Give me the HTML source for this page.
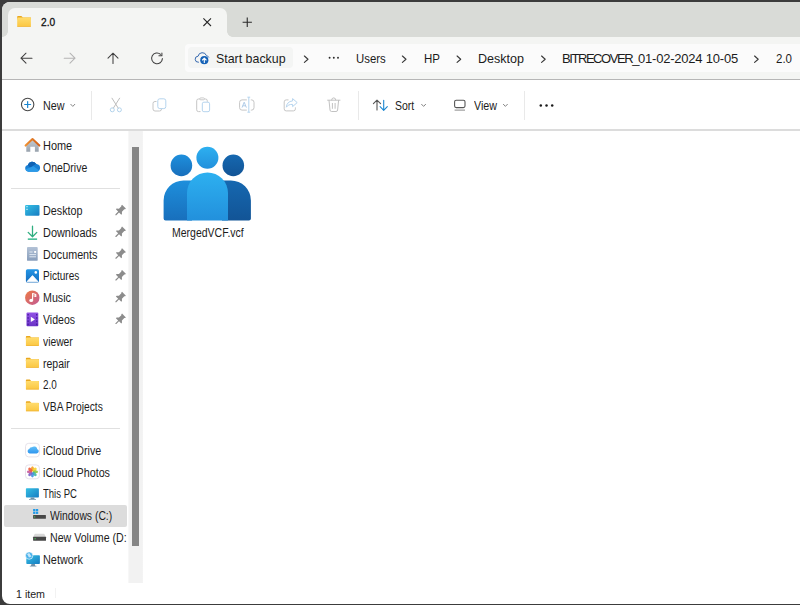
<!DOCTYPE html>
<html><head><meta charset="utf-8"><title>2.0</title>
<style>
*{box-sizing:border-box;margin:0;padding:0}
html,body{width:800px;height:605px;overflow:hidden;background:#3c3c3c}
body{font-family:"Liberation Sans",sans-serif;font-size:12px;color:#1b1b1b;position:relative}
.abs{position:absolute}
#win{position:absolute;left:2px;top:2px;width:806px;height:601.5px;background:#fff;border-radius:8px;overflow:hidden}
#title{position:absolute;left:0;top:0;width:100%;height:34.6px;background:#d9dbd7}
#tab{position:absolute;left:6px;top:6px;width:219px;height:29px;background:#f4f5f3;border-radius:7px 7px 0 0}
#nav{position:absolute;left:0;top:34.5px;width:100%;height:42.5px;background:#f4f5f3}
#navline{position:absolute;left:0;top:77px;width:100%;height:1px;background:#b6b6b6}
#addr{position:absolute;left:182.7px;top:42px;width:640px;height:28.2px;background:#fbfbfb;border-radius:4px}
#bk{position:absolute;left:186.2px;top:45.4px;width:105px;height:21px;background:#f4f5f4;border-radius:4px}
#tool{position:absolute;left:0;top:78px;width:100%;height:49px;background:#fff}
#toolline{position:absolute;left:0;top:127.3px;width:100%;height:1.4px;background:#dcdcdc}
#track{position:absolute;left:125.8px;top:128.5px;width:15.5px;height:452.5px;background:linear-gradient(90deg,#fbfbfb 0,#f2f2f2 1.2px,#f2f2f2 14.3px,#fbfbfb 15.5px)}
#thumb{position:absolute;left:130px;top:144.5px;width:7px;height:399px;background:#868686}
.t{position:absolute;white-space:nowrap;line-height:16px;transform-origin:0 0}
.sep{position:absolute;background:#e0e0e0;height:1px}
.vsep{position:absolute;background:#e9e9e9;width:1px}
#sel{position:absolute;left:1.5px;top:503px;width:123.7px;height:21.6px;background:#dcdcdc;border-radius:2px}
</style></head><body>
<div id="win">
 <div id="title"></div>
 <div id="tab"></div>
 <div class="abs" style="left:0;top:28.5px;width:6px;height:6px;background:radial-gradient(circle at 0 0,#d9dbd7 5.6px,#f4f5f3 6.2px)"></div>
 <div class="abs" style="left:225px;top:28.5px;width:6px;height:6px;background:radial-gradient(circle at 100% 0,#d9dbd7 5.6px,#f4f5f3 6.2px)"></div>
 <div id="nav"></div>
 <div id="addr"></div>
 <div id="bk"></div>
 <div id="navline"></div>
 <div id="tool"></div>
 <div id="toolline"></div>
 <div id="track"></div>
 <div id="thumb"></div>
 <div id="sel"></div>
 <div class="sep" style="left:9px;top:186.3px;width:109px"></div>
 <div class="sep" style="left:9px;top:426px;width:109px"></div>
 <div class="vsep" style="left:89px;top:89px;height:28.5px"></div>
 <div class="vsep" style="left:355.6px;top:89px;height:28.5px"></div>
 <div class="vsep" style="left:522px;top:89px;height:28.5px"></div>
 <div class="vsep" style="left:52.6px;top:586px;height:10px;background:#f2f2f2"></div>
 <div class="t" style="left:38.8px;top:12.36px;font-size:10.8px;color:#111;transform:scaleX(0.9390);-webkit-text-stroke:0.3px #111;">2.0</div>
 <div class="t" style="left:213.9px;top:49.20px;font-size:13px;color:#1c1c1c;transform:scaleX(0.9534);">Start backup</div>
 <div class="t" style="left:353.5px;top:49.20px;font-size:13px;color:#1c1c1c;transform:scaleX(0.8747);">Users</div>
 <div class="t" style="left:421.5px;top:49.20px;font-size:13px;color:#1c1c1c;transform:scaleX(0.8858);">HP</div>
 <div class="t" style="left:475.5px;top:49.20px;font-size:13px;color:#1c1c1c;transform:scaleX(0.9643);">Desktop</div>
 <div class="t" style="left:773.5px;top:49.20px;font-size:13px;color:#1c1c1c;transform:scaleX(0.8850);">2.0</div>
 <div class="t" style="left:40.5px;top:95.64px;font-size:12px;color:#1c1c1c;transform:scaleX(0.8953);">New</div>
 <div class="t" style="left:392.5px;top:95.64px;font-size:12px;color:#1c1c1c;transform:scaleX(0.8721);">Sort</div>
 <div class="t" style="left:471.5px;top:95.64px;font-size:12px;color:#1c1c1c;transform:scaleX(0.8916);">View</div>
 <div class="t" style="left:169.9px;top:223.04px;font-size:12px;color:#1c1c1c;transform:scaleX(0.8741);">MergedVCF.vcf</div>
 <div class="t" style="left:13.5px;top:584.42px;font-size:11.5px;color:#1c1c1c;transform:scaleX(0.9257);">1 item</div>
 <div class="t" style="left:40.5px;top:135.74px;font-size:12px;color:#1c1c1c;transform:scaleX(0.9121);">Home</div>
 <div class="t" style="left:40.5px;top:157.53px;font-size:12px;color:#1c1c1c;transform:scaleX(0.8720);">OneDrive</div>
 <div class="t" style="left:40.5px;top:201.11px;font-size:12px;color:#1c1c1c;transform:scaleX(0.8971);">Desktop</div>
 <div class="t" style="left:40.5px;top:222.90px;font-size:12px;color:#1c1c1c;transform:scaleX(0.9095);">Downloads</div>
 <div class="t" style="left:40.5px;top:244.69px;font-size:12px;color:#1c1c1c;transform:scaleX(0.8978);">Documents</div>
 <div class="t" style="left:40.5px;top:266.48px;font-size:12px;color:#1c1c1c;transform:scaleX(0.8372);">Pictures</div>
 <div class="t" style="left:40.5px;top:288.27px;font-size:12px;color:#1c1c1c;transform:scaleX(0.8901);">Music</div>
 <div class="t" style="left:40.5px;top:310.06px;font-size:12px;color:#1c1c1c;transform:scaleX(0.8771);">Videos</div>
 <div class="t" style="left:40.5px;top:331.85px;font-size:12px;color:#1c1c1c;transform:scaleX(0.8591);">viewer</div>
 <div class="t" style="left:40.5px;top:353.64px;font-size:12px;color:#1c1c1c;transform:scaleX(0.8733);">repair</div>
 <div class="t" style="left:40.5px;top:375.43px;font-size:12px;color:#1c1c1c;transform:scaleX(0.8270);">2.0</div>
 <div class="t" style="left:40.5px;top:397.22px;font-size:12px;color:#1c1c1c;transform:scaleX(0.8539);">VBA Projects</div>
 <div class="t" style="left:40.5px;top:440.80px;font-size:12px;color:#1c1c1c;transform:scaleX(0.8920);">iCloud Drive</div>
 <div class="t" style="left:40.5px;top:462.59px;font-size:12px;color:#1c1c1c;transform:scaleX(0.8967);">iCloud Photos</div>
 <div class="t" style="left:40.5px;top:484.38px;font-size:12px;color:#1c1c1c;transform:scaleX(0.7941);">This PC</div>
 <div class="t" style="left:47.8px;top:506.17px;font-size:12px;color:#1c1c1c;transform:scaleX(0.8637);">Windows (C:)</div>
 <div class="t" style="left:47.8px;top:527.96px;font-size:12px;color:#1c1c1c;transform:scaleX(0.8846);">New Volume (D:</div>
 <div class="t" style="left:40.5px;top:549.75px;font-size:12px;color:#1c1c1c;transform:scaleX(0.9065);">Network</div>
 <div class="t" style="left:560.0px;top:49.20px;font-size:13px;color:#1c1c1c"><span style="letter-spacing:-1.432px">BITRECOVER_</span><span style="letter-spacing:-0.216px">01-02-2024 10-05</span></div>
 <svg class="abs" style="left:-2px;top:-2px" width="800" height="605" viewBox="0 0 800 605">
<defs>
<linearGradient id="gf" x1="0" y1="0" x2="0" y2="1"><stop offset="0" stop-color="#ffdc6e"/><stop offset="1" stop-color="#fbc640"/></linearGradient>
<linearGradient id="gdesk" x1="0" y1="0" x2="1" y2="1"><stop offset="0" stop-color="#35c0e4"/><stop offset="1" stop-color="#177cc2"/></linearGradient>
<linearGradient id="gdoc" x1="0" y1="0" x2="0" y2="1"><stop offset="0" stop-color="#b3c2d6"/><stop offset="1" stop-color="#879dbb"/></linearGradient>
<linearGradient id="gpic" x1="0" y1="0" x2="0" y2="1"><stop offset="0" stop-color="#2496e6"/><stop offset="1" stop-color="#136bbd"/></linearGradient>
<linearGradient id="gmus" x1="0" y1="0" x2="1" y2="1"><stop offset="0" stop-color="#ee7a42"/><stop offset="1" stop-color="#c25a96"/></linearGradient>
<linearGradient id="gvid" x1="0" y1="0" x2="0" y2="1"><stop offset="0" stop-color="#9352e6"/><stop offset="1" stop-color="#6a33c6"/></linearGradient>
<linearGradient id="groof" x1="0" y1="0" x2="1" y2="0"><stop offset="0" stop-color="#f09030"/><stop offset="1" stop-color="#d2611a"/></linearGradient>
<linearGradient id="ghouse" x1="0" y1="0" x2="0" y2="1"><stop offset="0" stop-color="#c6ccd2"/><stop offset="1" stop-color="#98a2ad"/></linearGradient>
<linearGradient id="gic" x1="0" y1="0" x2="0" y2="1"><stop offset="0" stop-color="#62c0f8"/><stop offset="1" stop-color="#2f96ee"/></linearGradient>
<linearGradient id="pc" x1="0" y1="0" x2="0" y2="1"><stop offset="0" stop-color="#2db0f0"/><stop offset="1" stop-color="#2290dc"/></linearGradient>
<linearGradient id="pl" x1="0" y1="0" x2="0" y2="1"><stop offset="0" stop-color="#1e8fdc"/><stop offset="1" stop-color="#186fbc"/></linearGradient>
<linearGradient id="pr" x1="0" y1="0" x2="0" y2="1"><stop offset="0" stop-color="#1668b0"/><stop offset="1" stop-color="#125496"/></linearGradient>
</defs>
<path d="M18.00 16.00 h3.33 l1.6 1.6 h7.97 v2 h-13.70 v-2.8 q0 -0.8 0.8 -0.8z" fill="#e9a71e"/>
<rect x="17.20" y="17.50" width="13.70" height="9.30" rx="0.9" fill="url(#gf)"/>
<rect x="17.20" y="26.10" width="13.70" height="0.7" rx="0.3" fill="#eeb035" opacity="0.8"/>
<path d="M203.4 18.4 L211 26 M211 18.4 L203.4 26" stroke="#2a2a2a" stroke-width="1.1" fill="none"/>
<path d="M242.6 22.3 H251.9 M247.25 17.6 V27" stroke="#2a2a2a" stroke-width="1.1" fill="none"/>
<g fill="none" stroke="#404040" stroke-width="1.05" stroke-linecap="round" stroke-linejoin="round">
<path d="M32 58.2 H21 M26 53.2 L21 58.2 L26 63.2"/>
<path d="M113 63.5 V53.2 M108 58.2 L113 53.2 L118 58.2"/>
<path d="M162.4 58.6 A5.4 5.4 0 1 1 160.6 54.3"/>
<path d="M161.9 52.9 V55.7 H158.9"/>
</g>
<path d="M64.2 58.2 H75 M70 53.2 L75 58.2 L70 63.2" fill="none" stroke="#b4b4b4" stroke-width="1.05" stroke-linecap="round" stroke-linejoin="round"/>
<path d="M198.6 62.2 h-0.3 a3 3 0 0 1 -0.2 -6 a4.3 4.3 0 0 1 8.3 -0.6 a3.1 3.1 0 0 1 2.3 1.6" fill="none" stroke="#2d62ac" stroke-width="0.95" stroke-linecap="round"/>
<circle cx="204.3" cy="60.2" r="4.7" fill="#fbfbfb"/><circle cx="204.3" cy="60.2" r="4.1" fill="#1461b6"/>
<path d="M204.3 62.4 V58.6 M202.5 60 L204.3 58.2 L206.1 60" fill="none" stroke="#fff" stroke-width="1.1" stroke-linecap="round" stroke-linejoin="round"/>
<path d="M304.4 56 L308.0 59.2 L304.4 62.4" fill="none" stroke="#3a3a3a" stroke-width="1.15" stroke-linecap="round" stroke-linejoin="round"/>
<path d="M402.4 56 L406.0 59.2 L402.4 62.4" fill="none" stroke="#3a3a3a" stroke-width="1.15" stroke-linecap="round" stroke-linejoin="round"/>
<path d="M457.1 56 L460.7 59.2 L457.1 62.4" fill="none" stroke="#3a3a3a" stroke-width="1.15" stroke-linecap="round" stroke-linejoin="round"/>
<path d="M541.6 56 L545.2 59.2 L541.6 62.4" fill="none" stroke="#3a3a3a" stroke-width="1.15" stroke-linecap="round" stroke-linejoin="round"/>
<path d="M754.6 56 L758.2 59.2 L754.6 62.4" fill="none" stroke="#3a3a3a" stroke-width="1.15" stroke-linecap="round" stroke-linejoin="round"/>
<circle cx="329.6" cy="57.7" r="0.95" fill="#2a2a2a"/>
<circle cx="333.8" cy="57.7" r="0.95" fill="#2a2a2a"/>
<circle cx="338.0" cy="57.7" r="0.95" fill="#2a2a2a"/>
<circle cx="27.65" cy="104.5" r="6.2" fill="none" stroke="#4a4a4a" stroke-width="1.1"/>
<path d="M24.7 104.5 H30.6 M27.65 101.5 V107.5" stroke="#1a86d0" stroke-width="1.2" fill="none" stroke-linecap="round"/>
<path d="M70.8 104.3 L72.8 106.4 L74.8 104.3" fill="none" stroke="#777" stroke-width="0.9" stroke-linecap="round" stroke-linejoin="round"/>
<path d="M421.6 104.3 L423.6 106.4 L425.6 104.3" fill="none" stroke="#777" stroke-width="0.9" stroke-linecap="round" stroke-linejoin="round"/>
<path d="M503.4 104.3 L505.4 106.4 L507.4 104.3" fill="none" stroke="#777" stroke-width="0.9" stroke-linecap="round" stroke-linejoin="round"/>
<path d="M112 98.2 L118.3 108.2 M119.6 98.2 L113.3 108.2" stroke="#bdbdbd" stroke-width="1" fill="none" stroke-linecap="round"/>
<circle cx="112.3" cy="109.8" r="2" fill="none" stroke="#b3d3ec" stroke-width="1"/><circle cx="119.4" cy="109.8" r="2" fill="none" stroke="#b3d3ec" stroke-width="1"/>
<path d="M156.5 101.5 h-1.5 a2 2 0 0 0 -2 2 v5.5 a2 2 0 0 0 2 2 h4.5 a2 2 0 0 0 2 -2" fill="none" stroke="#c6c6c6" stroke-width="1"/>
<rect x="157.8" y="98.8" width="8" height="9.8" rx="2" fill="#fff" stroke="#b5d4ee" stroke-width="1"/>
<path d="M200.5 111.6 h-2 a1.8 1.8 0 0 1 -1.8 -1.8 v-9 a1.8 1.8 0 0 1 1.8 -1.8 h7 a1.8 1.8 0 0 1 1.8 1.8 v1" fill="none" stroke="#c6c6c6" stroke-width="1"/>
<rect x="199.8" y="97.9" width="4.6" height="1.9" rx="0.9" fill="#fff" stroke="#c6c6c6" stroke-width="0.9"/>
<rect x="202.3" y="102.2" width="7.3" height="9.5" rx="1.6" fill="#fff" stroke="#b5d4ee" stroke-width="1"/>
<path d="M246.8 99.9 h-4.8 a2.4 2.4 0 0 0 -2.4 2.4 v5.4 a2.4 2.4 0 0 0 2.4 2.4 h4.8 M250.8 99.9 h0.8 a2.4 2.4 0 0 1 2.4 2.4 v5.4 a2.4 2.4 0 0 1 -2.4 2.4 h-0.8" fill="none" stroke="#c6c6c6" stroke-width="1"/>
<path d="M242 107.6 L244.2 102.2 L246.4 107.6 M242.8 105.8 H245.6" fill="none" stroke="#a8c6e4" stroke-width="0.9"/>
<path d="M248.8 97.2 V112.2 M247.4 97.2 H250.2 M247.4 112.2 H250.2" fill="none" stroke="#b5d4ee" stroke-width="1"/>
<path d="M288.5 99.9 h-2.3 a2 2 0 0 0 -2 2 v7 a2 2 0 0 0 2 2 h7.2 a2 2 0 0 0 2 -2 v-1.5" fill="none" stroke="#c6c6c6" stroke-width="1"/>
<path d="M292.6 98.6 L297.2 102.6 L292.6 106.6 V104.4 C289.6 104.2 287.6 105.3 286.3 107.2 C286.6 103.6 288.8 101.2 292.6 100.9 Z" fill="#fff" stroke="#b5d4ee" stroke-width="1" stroke-linejoin="round"/>
<path d="M327.6 100.2 H340 M331.6 100 a2.1 2.1 0 0 1 4.2 0 M329 100.4 L330 110 a1.6 1.6 0 0 0 1.6 1.5 h4.4 a1.6 1.6 0 0 0 1.6 -1.5 L338.6 100.4 M332.4 103.4 V108.4 M335.1 103.4 V108.4" fill="none" stroke="#c2c2c2" stroke-width="1" stroke-linecap="round"/>
<path d="M377 110 V100.2 M373.4 103.7 L377 100.1 L380.6 103.7" fill="none" stroke="#555" stroke-width="1.1" stroke-linecap="round" stroke-linejoin="round"/>
<path d="M383.7 100.2 V110.2 M380.1 106.7 L383.7 110.3 L387.3 106.7" fill="none" stroke="#1a86d0" stroke-width="1.1" stroke-linecap="round" stroke-linejoin="round"/>
<rect x="454.6" y="100.2" width="10.4" height="7.4" rx="1.6" fill="none" stroke="#555" stroke-width="1.1"/>
<path d="M454.6 110.1 H465" stroke="#888" stroke-width="1" fill="none"/>
<circle cx="540.8" cy="105.5" r="1.25" fill="#1a1a1a"/>
<circle cx="546.5" cy="105.5" r="1.25" fill="#1a1a1a"/>
<circle cx="552.2" cy="105.5" r="1.25" fill="#1a1a1a"/>
<path d="M26.3 145.2 L32.5 139.6 L38.7 145.2 V151.7 H34.9 V146.8 H30.3 V151.7 H26.3 Z" fill="url(#ghouse)"/>
<path d="M25.6 145.6 L32.5 139.1 L39.4 145.6" fill="none" stroke="url(#groof)" stroke-width="2" stroke-linecap="round" stroke-linejoin="round"/>
<path d="M28.4 171.7 a3.4 3.4 0 0 1 -0.6 -6.7 a4.6 4.6 0 0 1 8.3 -1.2 a3.2 3.2 0 0 1 1.2 0.5 a3.8 3.8 0 0 1 -0.3 7.4 z" fill="#1a80d4"/>
<path d="M27.8 165 a4.6 4.6 0 0 1 8.3 -1.2 L30 167.8 z" fill="#0f62b4"/>
<path d="M25.6 169.2 L33.5 166.2 L39.2 170.4 a3.6 3.6 0 0 1 -2.2 1.3 H28.4 a3.3 3.3 0 0 1 -2.8 -2.5z" fill="#2b9ae8"/>
<rect x="25.1" y="205" width="14.4" height="10.7" rx="1" fill="url(#gdesk)"/>
<rect x="26.2" y="206.2" width="1.6" height="1" fill="#c8f0fa"/><rect x="26.2" y="208.8" width="1.6" height="1" fill="#c8f0fa"/>
<path d="M32.5 226.2 V236.6 M28.2 232.4 L32.5 236.8 L36.8 232.4" fill="none" stroke="#2fae80" stroke-width="1.3" stroke-linecap="round" stroke-linejoin="round"/>
<rect x="27.8" y="238.4" width="9.3" height="1.5" fill="#3bb890"/>
<rect x="27" y="247" width="10.7" height="13.8" rx="0.9" fill="url(#gdoc)"/>
<rect x="34.2" y="251" width="1.9" height="1.9" fill="#fff"/><path d="M29.4 252 H32.6 M29.4 254.6 H36 M29.4 256.8 H36" stroke="#e8eef6" stroke-width="0.9" fill="none"/>
<rect x="25.9" y="269.3" width="13.1" height="13.3" rx="1.6" fill="url(#gpic)"/>
<path d="M27 281.6 L32.5 275.6 L38 281.6 Z" fill="#fff" stroke="#fff" stroke-width="0.8" stroke-linejoin="round"/><circle cx="35.8" cy="272.4" r="1.3" fill="#fff"/>
<circle cx="32.3" cy="297.7" r="7.2" fill="url(#gmus)"/>
<ellipse cx="31.2" cy="300.4" rx="1.9" ry="1.6" fill="#fff"/><path d="M32.6 300.4 V293.6 L35.8 294.6 V296.4 L33.6 295.7" fill="none" stroke="#fff" stroke-width="1.1" stroke-linejoin="round"/>
<rect x="26.5" y="312.5" width="11.8" height="13.7" rx="1" fill="url(#gvid)"/>
<rect x="27.4" y="314" width="1.4" height="1.5" fill="#4a1fa0"/><rect x="36" y="314" width="1.4" height="1.5" fill="#4a1fa0"/>
<rect x="27.4" y="317.2" width="1.4" height="1.5" fill="#4a1fa0"/><rect x="36" y="317.2" width="1.4" height="1.5" fill="#4a1fa0"/>
<rect x="27.4" y="320.4" width="1.4" height="1.5" fill="#4a1fa0"/><rect x="36" y="320.4" width="1.4" height="1.5" fill="#4a1fa0"/>
<rect x="27.4" y="323.6" width="1.4" height="1.5" fill="#4a1fa0"/><rect x="36" y="323.6" width="1.4" height="1.5" fill="#4a1fa0"/>
<path d="M30.8 316.8 L34.9 319.4 L30.8 322 Z" fill="#fff"/>
<path d="M26.70 336.00 h3.12 l1.6 1.6 h7.58 v2 h-13.10 v-2.8 q0 -0.8 0.8 -0.8z" fill="#e9a71e"/>
<rect x="25.90" y="337.50" width="13.10" height="8.50" rx="0.9" fill="url(#gf)"/>
<rect x="25.90" y="345.30" width="13.10" height="0.7" rx="0.3" fill="#eeb035" opacity="0.8"/>
<path d="M26.70 357.77 h3.12 l1.6 1.6 h7.58 v2 h-13.10 v-2.8 q0 -0.8 0.8 -0.8z" fill="#e9a71e"/>
<rect x="25.90" y="359.27" width="13.10" height="8.50" rx="0.9" fill="url(#gf)"/>
<rect x="25.90" y="367.07" width="13.10" height="0.7" rx="0.3" fill="#eeb035" opacity="0.8"/>
<path d="M26.70 379.54 h3.12 l1.6 1.6 h7.58 v2 h-13.10 v-2.8 q0 -0.8 0.8 -0.8z" fill="#e9a71e"/>
<rect x="25.90" y="381.04" width="13.10" height="8.50" rx="0.9" fill="url(#gf)"/>
<rect x="25.90" y="388.84" width="13.10" height="0.7" rx="0.3" fill="#eeb035" opacity="0.8"/>
<path d="M26.70 401.31 h3.12 l1.6 1.6 h7.58 v2 h-13.10 v-2.8 q0 -0.8 0.8 -0.8z" fill="#e9a71e"/>
<rect x="25.90" y="402.81" width="13.10" height="8.50" rx="0.9" fill="url(#gf)"/>
<rect x="25.90" y="410.61" width="13.10" height="0.7" rx="0.3" fill="#eeb035" opacity="0.8"/>
<rect x="25.5" y="443.3" width="13.9" height="13.6" rx="3.2" fill="#fff" stroke="#dfdbe4" stroke-width="0.8"/>
<path d="M29.6 453.4 a2.3 2.3 0 0 1 -0.3 -4.5 a2.2 2.2 0 0 1 2.6 -1.6 a3.2 3.2 0 0 1 5.4 2 a2.1 2.1 0 0 1 -0.6 4.1 z" fill="url(#gic)"/>
<rect x="25.5" y="464.9" width="13.9" height="13.9" rx="3.2" fill="#fff" stroke="#dfdbe4" stroke-width="0.8"/>
<ellipse cx="32.45" cy="468.85" rx="1.5" ry="2.6" fill="#f5a11f" opacity="0.9" transform="rotate(0 32.45 468.85)"/>
<ellipse cx="34.57" cy="469.73" rx="1.5" ry="2.6" fill="#f3d32b" opacity="0.9" transform="rotate(45 34.57 469.73)"/>
<ellipse cx="35.45" cy="471.85" rx="1.5" ry="2.6" fill="#93c83e" opacity="0.9" transform="rotate(90 35.45 471.85)"/>
<ellipse cx="34.57" cy="473.97" rx="1.5" ry="2.6" fill="#3fb6a8" opacity="0.9" transform="rotate(135 34.57 473.97)"/>
<ellipse cx="32.45" cy="474.85" rx="1.5" ry="2.6" fill="#3f8fe0" opacity="0.9" transform="rotate(180 32.45 474.85)"/>
<ellipse cx="30.33" cy="473.97" rx="1.5" ry="2.6" fill="#7a63c8" opacity="0.9" transform="rotate(225 30.33 473.97)"/>
<ellipse cx="29.45" cy="471.85" rx="1.5" ry="2.6" fill="#c65a9c" opacity="0.9" transform="rotate(270 29.45 471.85)"/>
<ellipse cx="30.33" cy="469.73" rx="1.5" ry="2.6" fill="#ee5a3a" opacity="0.9" transform="rotate(315 30.33 469.73)"/>
<rect x="25.9" y="488.2" width="13" height="9.4" rx="0.8" fill="url(#gdesk)"/>
<path d="M30.8 497.6 H34.2 L34.6 499 H36 V499.8 H29 V499 H30.4 Z" fill="#6f90a8"/>
<rect x="33.1" y="509" width="2.3" height="2.2" fill="#1f9ae8"/><rect x="35.9" y="509" width="2.3" height="2.2" fill="#1f9ae8"/><rect x="33.1" y="511.7" width="2.3" height="2.2" fill="#1f9ae8"/><rect x="35.9" y="511.7" width="2.3" height="2.2" fill="#1f9ae8"/>
<rect x="33.1" y="515" width="12.8" height="3.8" rx="0.5" fill="#474747"/><rect x="34.3" y="516.2" width="0.9" height="1.4" fill="#49d25a"/>
<path d="M34.8 533.8 H44.2 L45.9 537 H33.1 Z" fill="#d9d9d9"/>
<rect x="33.1" y="536.8" width="12.9" height="4" rx="0.5" fill="#474747"/><rect x="34.6" y="538" width="1" height="1.4" fill="#49d25a"/>
<rect x="26.3" y="555.3" width="13.6" height="8.7" rx="0.8" fill="url(#gdesk)"/>
<path d="M31.4 564 H34.8 L35.2 565.8 H36.4 V566.6 H29.8 V565.8 H31 Z" fill="#6f90a8"/>
<circle cx="29.2" cy="555.6" r="3.7" fill="#4ab2ea" stroke="#fff" stroke-width="0.6"/><path d="M27 554 L29 557.6 L31.5 556.4 L29.2 553 Z" fill="#d9effb" opacity="0.85"/>
<g transform="translate(120 210.60) rotate(45)"><path d="M-2.7 -5.6 H2.7 V-4.6 L2.1 -4 V-0.6 L3.8 1 V2 H0.6 V5.8 L0 6.6 L-0.6 5.8 V2 H-3.8 V1 L-2.1 -0.6 V-4 L-2.7 -4.6 Z" fill="#8c8c8c"/></g>
<g transform="translate(120 232.37) rotate(45)"><path d="M-2.7 -5.6 H2.7 V-4.6 L2.1 -4 V-0.6 L3.8 1 V2 H0.6 V5.8 L0 6.6 L-0.6 5.8 V2 H-3.8 V1 L-2.1 -0.6 V-4 L-2.7 -4.6 Z" fill="#8c8c8c"/></g>
<g transform="translate(120 254.14) rotate(45)"><path d="M-2.7 -5.6 H2.7 V-4.6 L2.1 -4 V-0.6 L3.8 1 V2 H0.6 V5.8 L0 6.6 L-0.6 5.8 V2 H-3.8 V1 L-2.1 -0.6 V-4 L-2.7 -4.6 Z" fill="#8c8c8c"/></g>
<g transform="translate(120 275.91) rotate(45)"><path d="M-2.7 -5.6 H2.7 V-4.6 L2.1 -4 V-0.6 L3.8 1 V2 H0.6 V5.8 L0 6.6 L-0.6 5.8 V2 H-3.8 V1 L-2.1 -0.6 V-4 L-2.7 -4.6 Z" fill="#8c8c8c"/></g>
<g transform="translate(120 297.68) rotate(45)"><path d="M-2.7 -5.6 H2.7 V-4.6 L2.1 -4 V-0.6 L3.8 1 V2 H0.6 V5.8 L0 6.6 L-0.6 5.8 V2 H-3.8 V1 L-2.1 -0.6 V-4 L-2.7 -4.6 Z" fill="#8c8c8c"/></g>
<g transform="translate(120 319.45) rotate(45)"><path d="M-2.7 -5.6 H2.7 V-4.6 L2.1 -4 V-0.6 L3.8 1 V2 H0.6 V5.8 L0 6.6 L-0.6 5.8 V2 H-3.8 V1 L-2.1 -0.6 V-4 L-2.7 -4.6 Z" fill="#8c8c8c"/></g>
<path d="M163.6 220.6 V200.4 A20 20 0 0 1 183.6 180.4 H192 V220.6 H165.6 A2 2 0 0 1 163.6 218.6 Z" fill="url(#pl)"/>
<path d="M250.9 220.6 V200.4 A20 20 0 0 0 230.9 180.4 H222 V220.6 H248.9 A2 2 0 0 0 250.9 218.6 Z" fill="url(#pr)"/>
<path d="M187 220.6 V193 A20.5 20.5 0 0 1 228 193 V220.6 Z" fill="url(#pc)"/>
<circle cx="181.4" cy="165.4" r="10.8" fill="url(#pl)"/>
<circle cx="233.3" cy="165.4" r="10.8" fill="url(#pr)"/>
<circle cx="207.4" cy="157.8" r="11" fill="url(#pc)"/>
</svg>
</div>
</body></html>
